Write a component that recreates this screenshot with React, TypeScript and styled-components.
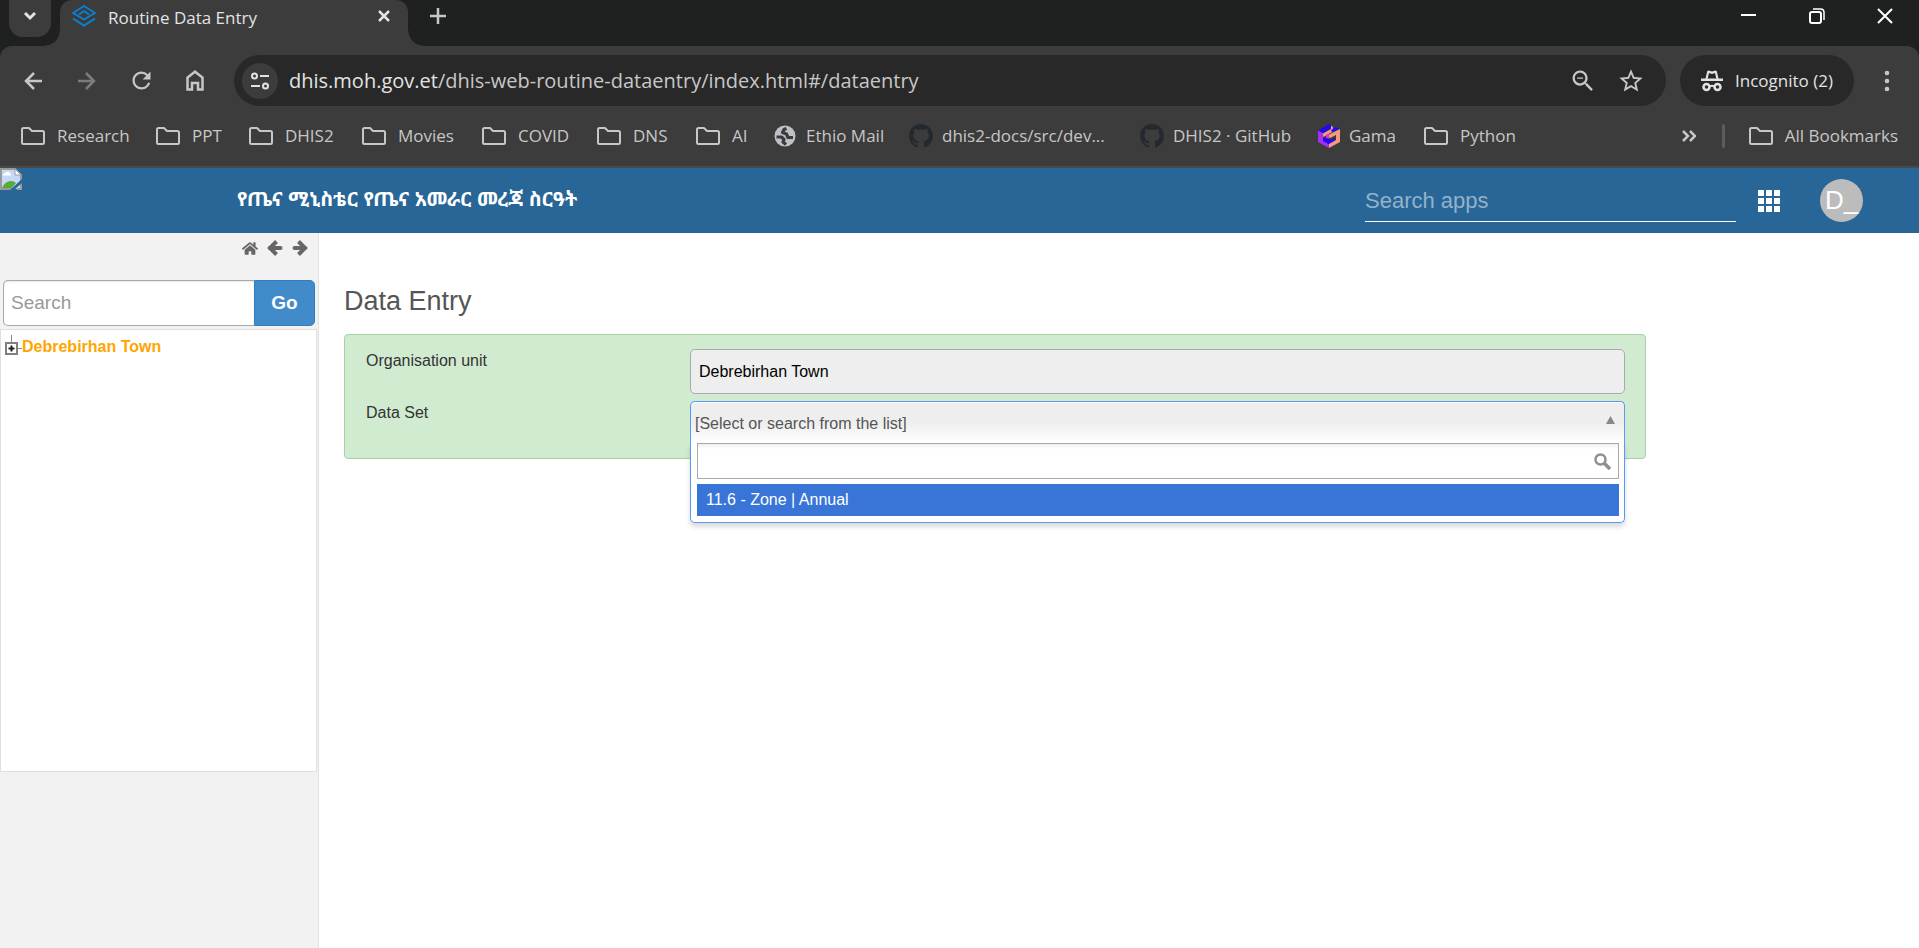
import React, { useState } from 'react';
import styled, { createGlobalStyle } from 'styled-components';
import { MdRefresh, MdStarBorder, MdZoomOut } from 'react-icons/md';
import { FaHome } from 'react-icons/fa';

const GlobalStyle = createGlobalStyle`
  * { box-sizing: border-box; }
  html, body, #root { height: 100%; }
  body {
    margin: 0;
    font-family: "Liberation Sans", Arial, sans-serif;
    font-size: 16px;
    background: #fff;
  }
  button, input { font-family: inherit; }
`;

const Window = styled.div`
  display: flex;
  flex-direction: column;
  min-height: 100%;
`;

/* ---------- browser chrome ---------- */

const Chrome = styled.div`
  background: #1f2120;
  font-family: "Open Sans", "Noto Sans", sans-serif;
  color: #c7c7c7;
`;

const PlainButton = styled.button`
  display: flex;
  align-items: center;
  justify-content: center;
  flex: none;
  padding: 0;
  border: 0;
  background: none;
  color: inherit;
  cursor: pointer;
`;

const TabStrip = styled.div`
  display: flex;
  height: 46px;
  padding-left: 9px;
`;

const TabSearch = styled(PlainButton)`
  width: 42px;
  height: 37px;
  margin-right: 9px;
  padding-bottom: 5px;
  border-radius: 0 0 14px 14px;
  background: #3c3c3c;
  color: #e3e3e3;
`;

const Tab = styled.div`
  position: relative;
  display: flex;
  align-items: center;
  width: 348px;
  padding: 0 18px 14px 12px;
  border-radius: 12px 12px 0 0;
  background: #3c3c3c;
  color: #e3e3e3;

  &::before, &::after {
    content: "";
    position: absolute;
    bottom: 0;
    width: 15px;
    height: 15px;
  }
  &::before {
    right: 100%;
    background: radial-gradient(circle at 0 0, transparent 14px, #3c3c3c 15px);
  }
  &::after {
    left: 100%;
    background: radial-gradient(circle at 100% 0, transparent 14px, #3c3c3c 15px);
  }
`;

const TabTitle = styled.span`
  flex: 1;
  margin-left: 12px;
  padding-top: 4px;
  font-size: 17px;
  line-height: 20px;
  white-space: nowrap;
`;

const NewTab = styled(PlainButton)`
  width: 30px;
  height: 32px;
  margin-left: 15px;
`;

const WindowControls = styled.div`
  display: flex;
  margin-left: auto;
  color: #fff;
`;

const WindowButton = styled(PlainButton)`
  width: 68px;
  height: 31px;
`;

const Toolbar = styled.div`
  display: flex;
  align-items: center;
  height: 69px;
  padding: 0 13px 0 6px;
  border-radius: 12px 12px 0 0;
  background: #3c3c3c;
`;

const NavButton = styled(PlainButton)<{ $dim?: boolean }>`
  width: 54px;
  height: 40px;
  color: ${(p) => (p.$dim ? '#7c7c7c' : '#c7c7c7')};
`;

const AddressBar = styled.div`
  display: flex;
  flex: 1;
  align-items: center;
  min-width: 0;
  height: 51px;
  margin-left: 12px;
  padding: 0 11px 0 8px;
  border-radius: 26px;
  background: #282828;
`;

const SiteInfo = styled(PlainButton)`
  width: 36px;
  height: 36px;
  border-radius: 50%;
  background: #3c3c3c;
  color: #e3e3e3;
`;

const Url = styled.div`
  flex: 1;
  min-width: 0;
  margin-left: 11px;
  overflow: hidden;
  font-size: 20px;
  line-height: 28px;
  white-space: nowrap;

  strong { font-weight: 400; color: #e3e3e3; }
`;

const BarButton = styled(PlainButton)`
  width: 48px;
  height: 40px;
`;

const Incognito = styled(PlainButton)`
  gap: 12px;
  width: 174px;
  height: 51px;
  margin: 0 14px;
  border-radius: 26px;
  background: #282828;
  color: #e3e3e3;
  font-size: 17px;
  white-space: nowrap;
`;

const MenuButton = styled(PlainButton)`
  width: 38px;
  height: 40px;
`;

const BookmarksBar = styled.nav`
  display: flex;
  align-items: center;
  height: 53px;
  padding: 0 21px 10px;
  border-bottom: 2px solid #4a4a4a;
  background: #3c3c3c;
`;

const Bookmark = styled.a<{ $width?: number; $gap?: number }>`
  display: flex;
  flex: none;
  align-items: center;
  gap: ${(p) => p.$gap ?? 12}px;
  width: ${(p) => (p.$width ? `${p.$width}px` : 'auto')};
  color: inherit;
  font-size: 17px;
  line-height: 24px;
  text-decoration: none;
  white-space: nowrap;
`;

const Overflow = styled(PlainButton)`
  width: 14px;
  margin-left: auto;
`;

const Divider = styled.span`
  width: 3px;
  height: 24px;
  margin: 0 24px 0 26px;
  border-radius: 2px;
  background: #5c5c5c;
`;

/* ---------- application ---------- */

const Header = styled.header`
  display: flex;
  height: 65px;
  padding-right: 56px;
  background: #276696;
  color: #fff;
`;

const Logo = styled.a`
  display: block;
  width: 237px;
`;

const SiteTitle = styled.h1`
  margin: 0 auto 0 0;
  padding-top: 18px;
  font-family: "Liberation Sans", "Noto Sans Ethiopic", "Abyssinica SIL", "Nyala", sans-serif;
  font-size: 20px;
  line-height: 26px;
  white-space: nowrap;
`;

const AppSearch = styled.input`
  width: 371px;
  height: 42px;
  margin-top: 12px;
  padding: 0;
  border: 0;
  border-bottom: 1px solid #fff;
  outline: 0;
  background: none;
  color: #fff;
  font-size: 22px;

  &::placeholder { color: #93b2ca; opacity: 1; }
`;

const AppsButton = styled(PlainButton)`
  align-self: center;
  width: 22px;
  height: 22px;
  margin: 0 40px 0 22px;
`;

const Avatar = styled(PlainButton)`
  align-self: center;
  width: 43px;
  height: 43px;
  border-radius: 50%;
  background: #bcbcbc;
  color: #fff;
  font-size: 26px;
`;

const Body = styled.div`
  display: flex;
  flex: 1;
`;

const Sidebar = styled.aside`
  display: flex;
  flex-direction: column;
  flex: none;
  width: 319px;
  padding-right: 1px;
  border-right: 1px solid #e0e0e0;
  background: #f2f2f2;
`;

const SidebarTools = styled.div`
  display: flex;
  justify-content: flex-end;
  gap: 9px;
  height: 47px;
  padding: 7px 9px 0 0;
  color: #666;
`;

const ToolButton = styled(PlainButton)`
  width: 16px;
  height: 16px;
`;

const SearchForm = styled.form`
  display: flex;
  margin: 0 2px 3px 3px;
`;

const SearchInput = styled.input`
  flex: 1;
  min-width: 0;
  height: 46px;
  padding: 0 7px;
  border: 1px solid #aaa;
  border-right: 0;
  border-radius: 5px 0 0 5px;
  outline: 0;
  box-shadow: inset 0 1px 2px rgba(0, 0, 0, 0.1);
  font-size: 19px;

  &::placeholder { color: #999; opacity: 1; }
`;

const GoButton = styled.button`
  width: 61px;
  height: 46px;
  padding: 0;
  border: 1px solid #357ebd;
  border-radius: 0 5px 5px 0;
  background: #428bca;
  color: #fff;
  font-size: 19px;
  font-weight: 700;
  cursor: pointer;
`;

const Tree = styled.ul`
  height: 443px;
  margin: 0;
  padding: 5px 0 0 4px;
  border: 1px solid #e0e0e0;
  background: #fff;
  list-style: none;
`;

const TreeItem = styled.li`
  display: flex;
  align-items: flex-start;
`;

const TreeLink = styled.a`
  margin-top: 2px;
  color: #ffa500;
  font-weight: 700;
  line-height: 20px;
  text-decoration: none;
`;

const Main = styled.main`
  display: grid;
  flex: 1;
  grid-template-columns: minmax(0, 62fr) 13fr;
  align-content: start;
  padding: 52px 0 0 25px;
`;

const PageTitle = styled.h2`
  grid-column: 1 / -1;
  margin: 0 0 17px;
  color: #555;
  font-size: 27px;
  font-weight: 400;
  line-height: 32px;
`;

const FormPanel = styled.div`
  display: grid;
  grid-template-columns: 324px minmax(0, 1fr);
  row-gap: 7px;
  padding: 14px 20px 12px 21px;
  border: 1px solid #a3d3a3;
  border-radius: 4px;
  background: #d0ebd0;
  color: #333;
`;

const FieldLabel = styled.label`
  padding-top: 2px;
  line-height: 20px;
`;

const UnitInput = styled.input`
  width: 100%;
  height: 45px;
  padding: 0 8px;
  border: 1px solid #aaa;
  border-radius: 5px;
  outline: 0;
  background: #eee;
  color: #000;
  font-size: 16px;
`;

const Combo = styled.div`
  position: relative;
  height: 45px;
`;

const ComboTrigger = styled.button`
  display: flex;
  align-items: center;
  justify-content: space-between;
  width: 100%;
  height: 42px;
  padding: 2px 9px 0 4px;
  border: 1px solid #5897fb;
  border-bottom: 0;
  border-radius: 5px 5px 0 0;
  background: linear-gradient(#eee 50%, #fff);
  box-shadow: inset 0 1px 0 #fff;
  color: #555;
  font-size: 16px;
  text-align: left;
  cursor: pointer;

  svg { margin-bottom: 7px; }
`;

const Drop = styled.div`
  position: absolute;
  top: 42px;
  left: 0;
  right: 0;
  padding: 0 5px 6px 6px;
  border: 1px solid #5897fb;
  border-top: 0;
  border-radius: 0 0 5px 5px;
  background: #fff;
  box-shadow: 0 4px 5px rgba(0, 0, 0, 0.15);
`;

const DropSearch = styled.label`
  display: flex;
  align-items: center;
  height: 36px;
  padding-right: 7px;
  border: 1px solid #aaa;
  background: linear-gradient(#eee, #fff 15%);
  color: #909090;

  input {
    flex: 1;
    min-width: 0;
    height: 100%;
    padding: 0 6px;
    border: 0;
    outline: 0;
    background: none;
    font-size: 16px;
  }
`;

const Options = styled.ul`
  margin: 5px 0 0;
  padding: 0;
  list-style: none;
`;

const Option = styled.li`
  padding: 6px 9px;
  background: #3875d7;
  color: #fff;
  line-height: 20px;
  cursor: pointer;
`;

/* ---------- drawings ---------- */

const stroke = { fill: 'none', stroke: 'currentColor' } as const;

const FolderIcon = () => (
  <svg width="24" height="18" viewBox="0 0 24 18" {...stroke} strokeWidth="2" strokeLinejoin="round">
    <path d="M1 2.5Q1 1 2.5 1H8l3 3h10.5Q23 4 23 5.5v10q0 1.5-1.5 1.5h-19Q1 17 1 15.5z" />
  </svg>
);

const GlobeIcon = () => (
  <svg width="23" height="22" viewBox="0 0 23 22" {...stroke}>
    <circle cx="11" cy="11" r="10.5" fill="#bdc1c6" stroke="none" />
    <path stroke="#3c3c3c" strokeWidth="3.2" strokeLinejoin="round" d="M2.5 12h5l2.500 2.500-1 2.500 3 2.500M12.500 3.500 10 4.500 8.500 7.500l4 1.500 1.500 3.500h5" />
  </svg>
);

const GithubIcon = () => (
  <svg width="24" height="24" viewBox="0 0 16 16" fill="#24292f">
    <path d="M8 0C3.58 0 0 3.58 0 8c0 3.54 2.29 6.53 5.47 7.59.4.07.55-.17.55-.38 0-.19-.01-.82-.01-1.49-2.01.37-2.53-.49-2.69-.94-.09-.23-.48-.94-.82-1.13-.28-.15-.68-.52-.01-.53.63-.01 1.08.58 1.23.82.72 1.21 1.87.87 2.33.66.07-.52.28-.87.51-1.07-1.78-.2-3.64-.89-3.64-3.95 0-.87.31-1.59.82-2.15-.08-.2-.36-1.02.08-2.12 0 0 .67-.21 2.2.82.64-.18 1.32-.27 2-.27s1.36.09 2 .27c1.53-1.04 2.2-.82 2.2-.82.44 1.1.16 1.92.08 2.12.51.56.82 1.27.82 2.15 0 3.07-1.87 3.75-3.65 3.95.29.25.54.73.54 1.48 0 1.07-.01 1.93-.01 2.2 0 .21.15.46.55.38A8.01 8.01 0 0 0 16 8c0-4.42-3.58-8-8-8z" />
  </svg>
);

const GamaIcon = () => (
  <svg width="22" height="24" viewBox="0 0 22 24">
    <path fill="#a62ff5" d="M0 6.500 5 9v7l6 4v4L0 18z" />
    <path fill="#2208f5" d="M11 0 0 6.500 5 9l8-4.500V1.500z" />
    <path fill="#f59a7d" d="M13 1.500V5L5 9.500V13l3-1.500 7-4V3z" />
    <path fill="#2208f5" d="M5 14v3l6 3.500 6-3.500v-3l-5 2-3-2zM14 8l8-3-4-2-5 3z" />
    <path fill="#f59a7d" d="M22 5v13l-11 6v-4l7-4v-5l-6 3-3-2 5-3z" />
    <path fill="#e12fd8" d="m8 11 3-1.500v5L8 14z" />
  </svg>
);

const DhisIcon = () => (
  <svg width="24" height="22" viewBox="0 0 24 22" fill="none" stroke="#0a80d0" strokeWidth="2" strokeLinejoin="round">
    <path d="M1 8 12 1l11 7-11 6.5z" />
    <path d="M7 9.5 12 6l5 3.5" />
    <path d="m1 13.5 11 7.2 11-7.2" />
  </svg>
);

const BrokenImage = () => (
  <svg width="22" height="22" viewBox="0 0 22 22" role="img" aria-label="logo">
    <path fill="#c5d9f7" d="M1 1h14l6 6v14H1z" />
    <path fill="#fff" d="M3 7q0-2 2.500-2 1-2 3-1t2 2 1 1.500H3z" />
    <path fill="#58ab3a" d="M2 20q3-7 9-7 3 0 5 2l-5 6H2z" />
    <path fill="none" stroke="#9a9a9a" strokeWidth="2" d="M1 22V1h14l6 6v15M0 21h13M17 21h4" />
    <path fill="#fff" stroke="#9a9a9a" d="M15 1v6h6z" />
    <path fill="#276696" d="M22 11v4l-8 7h-4z" />
  </svg>
);

const IncognitoIcon = () => (
  <svg width="22" height="22" viewBox="0 0 22 22">
    <path fill="currentColor" d="M7.5.5 11 1.5 14.5.5q1 0 1.3 1L17.5 8.500H22v2.500H0V8.500h4.500L6.200 1.500Q6.500.5 7.500.5z" />
    <path fill="#282828" d="m8 3-1.300 5.500h8.600L14 3l-3 1z" />
    <path {...stroke} strokeWidth="2" d="M8.500 16.500q2.500-1.500 5 0" />
    <circle cx="5.5" cy="17" r="3" {...stroke} strokeWidth="2.5" />
    <circle cx="16.5" cy="17" r="3" {...stroke} strokeWidth="2.5" />
  </svg>
);

const AppsIcon = () => (
  <svg width="22" height="22" viewBox="0 0 22 22" fill="currentColor">
    {[0, 8, 16].map((y) => [0, 8, 16].map((x) => <rect key={`${x}-${y}`} x={x} y={y} width="6" height="6" />))}
  </svg>
);

const ArrowIcon = ({ right }: { right?: boolean }) => (
  <svg width="16" height="16" viewBox="0 0 16 16" {...stroke} strokeWidth="4">
    <path strokeLinecap="round" d={right ? 'M2.500 8H13' : 'M13.500 8H3'} />
    <path d={right ? 'm6.500 1.500 6.500 6.500-6.500 6.500' : 'M9.500 1.500 3 8l6.500 6.500'} />
  </svg>
);

const MagnifierIcon = () => (
  <svg width="17" height="17" viewBox="0 0 17 17" {...stroke}>
    <circle cx="6.5" cy="6.5" r="5" strokeWidth="2.5" />
    <path strokeWidth="3.5" d="m10 10 6 6" />
  </svg>
);

const ExpandIcon = () => (
  <svg width="17" height="20" viewBox="0 0 17 20" {...stroke}>
    <path stroke="#888" d="M6.5 0v7M12 13.5h5" />
    <rect x="1" y="8" width="11" height="11" stroke="#808080" strokeWidth="2" fill="#fff" />
    <path stroke="#222" strokeWidth="2" d="M3.500 13.500h6M6.500 10.500v6" />
  </svg>
);

type Mark = { label: string; width?: number; kind?: 'globe' | 'github' | 'gama' };

const bookmarks: Mark[] = [
  { label: 'Research', width: 135 },
  { label: 'PPT', width: 93 },
  { label: 'DHIS2', width: 113 },
  { label: 'Movies', width: 120 },
  { label: 'COVID', width: 115 },
  { label: 'DNS', width: 99 },
  { label: 'AI', width: 78 },
  { label: 'Ethio Mail', width: 135, kind: 'globe' },
  { label: 'dhis2-docs/src/dev...', width: 231, kind: 'github' },
  { label: 'DHIS2 · GitHub', width: 178, kind: 'github' },
  { label: 'Gama', width: 106, kind: 'gama' },
  { label: 'Python' },
];

const MarkIcon = ({ kind }: { kind?: Mark['kind'] }) => {
  if (kind === 'globe') return <GlobeIcon />;
  if (kind === 'github') return <GithubIcon />;
  if (kind === 'gama') return <GamaIcon />;
  return <FolderIcon />;
};

const BrowserChrome = () => (
  <Chrome>
    <TabStrip>
      <TabSearch aria-label="Search tabs">
        <svg width="14" height="10" viewBox="0 0 14 10" {...stroke} strokeWidth="3"><path d="m2 2 5 5 5-5" /></svg>
      </TabSearch>
      <Tab>
        <DhisIcon />
        <TabTitle>Routine Data Entry</TabTitle>
        <PlainButton aria-label="Close tab">
          <svg width="12" height="12" viewBox="0 0 12 12" {...stroke} strokeWidth="2.5"><path d="m1 1 10 10M11 1 1 11" /></svg>
        </PlainButton>
      </Tab>
      <NewTab aria-label="New tab">
        <svg width="16" height="16" viewBox="0 0 16 16" {...stroke} strokeWidth="2.5"><path d="M8 0v16M0 8h16" /></svg>
      </NewTab>
      <WindowControls>
        <WindowButton aria-label="Minimize">
          <svg width="16" height="16" viewBox="0 0 16 16" {...stroke} strokeWidth="2"><path d="M0 7h15" /></svg>
        </WindowButton>
        <WindowButton aria-label="Restore">
          <svg width="16" height="16" viewBox="0 0 16 16" {...stroke} strokeWidth="2">
            <rect x="1" y="4" width="11" height="11" rx="2" />
            <path strokeWidth="1.5" d="M4 1h7.500Q15 1 15 4.500V12" />
          </svg>
        </WindowButton>
        <WindowButton aria-label="Close">
          <svg width="16" height="16" viewBox="0 0 16 16" {...stroke} strokeWidth="2"><path d="m1 1 14 14M15 1 1 15" /></svg>
        </WindowButton>
      </WindowControls>
    </TabStrip>
    <Toolbar>
      <NavButton aria-label="Back">
        <svg width="18" height="18" viewBox="0 0 18 18" {...stroke} strokeWidth="2.5"><path d="M18 9H2M10 1 2 9l8 8" /></svg>
      </NavButton>
      <NavButton aria-label="Forward" $dim>
        <svg width="18" height="18" viewBox="0 0 18 18" {...stroke} strokeWidth="2.5"><path d="M0 9h16M8 1l8 8-8 8" /></svg>
      </NavButton>
      <NavButton aria-label="Reload"><MdRefresh size={27} /></NavButton>
      <NavButton aria-label="Home">
        <svg width="18" height="21" viewBox="0 0 18 21" {...stroke} strokeWidth="2.5"><path d="M1.500 19.500V7.500L9 1.700l7.500 5.800v12H12V13H6v6.500z" /></svg>
      </NavButton>
      <AddressBar>
        <SiteInfo aria-label="View site information">
          <svg width="18" height="18" viewBox="0 0 18 18" {...stroke} strokeWidth="2">
            <circle cx="3.5" cy="4" r="2.5" /><path d="M9 4h9M0 14h9" /><circle cx="14.5" cy="14" r="2.5" />
          </svg>
        </SiteInfo>
        <Url><strong>dhis.moh.gov.et</strong>/dhis-web-routine-dataentry/index.html#/dataentry</Url>
        <BarButton aria-label="Zoom"><MdZoomOut size={28} /></BarButton>
        <BarButton aria-label="Bookmark this tab"><MdStarBorder size={28} /></BarButton>
      </AddressBar>
      <Incognito><IncognitoIcon />Incognito (2)</Incognito>
      <MenuButton aria-label="Menu">
        <svg width="6" height="22" viewBox="0 0 6 22" fill="currentColor">
          <circle cx="3" cy="3" r="2.3" /><circle cx="3" cy="11" r="2.3" /><circle cx="3" cy="19" r="2.3" />
        </svg>
      </MenuButton>
    </Toolbar>
    <BookmarksBar aria-label="Bookmarks">
      {bookmarks.map((b) => (
        <Bookmark key={b.label} href="#" $width={b.width} $gap={b.kind ? 9 : 12}>
          <MarkIcon kind={b.kind} />
          {b.label}
        </Bookmark>
      ))}
      <Overflow aria-label="More bookmarks">
        <svg width="14" height="12" viewBox="0 0 14 12" {...stroke} strokeWidth="2.5"><path d="m1 1 5 5-5 5M8 1l5 5-5 5" /></svg>
      </Overflow>
      <Divider />
      <Bookmark href="#"><FolderIcon />All Bookmarks</Bookmark>
    </BookmarksBar>
  </Chrome>
);

export default function App() {
  const [appQuery, setAppQuery] = useState('');
  const [unitQuery, setUnitQuery] = useState('');
  const [open, setOpen] = useState(true);
  const [dataSetQuery, setDataSetQuery] = useState('');

  return (
    <Window>
      <GlobalStyle />
      <BrowserChrome />
      <Header>
        <Logo href="#"><BrokenImage /></Logo>
        <SiteTitle lang="am">የጤና ሚኒስቴር የጤና አመራር መረጃ ስርዓት</SiteTitle>
        <AppSearch aria-label="Search apps" placeholder="Search apps" value={appQuery} onChange={(e) => setAppQuery(e.target.value)} />
        <AppsButton aria-label="Apps"><AppsIcon /></AppsButton>
        <Avatar aria-label="Profile">D_</Avatar>
      </Header>
      <Body>
        <Sidebar>
          <SidebarTools>
            <ToolButton aria-label="Home"><FaHome size={17} /></ToolButton>
            <ToolButton aria-label="Hide tree"><ArrowIcon /></ToolButton>
            <ToolButton aria-label="Show tree"><ArrowIcon right /></ToolButton>
          </SidebarTools>
          <SearchForm onSubmit={(e) => e.preventDefault()}>
            <SearchInput aria-label="Search" placeholder="Search" value={unitQuery} onChange={(e) => setUnitQuery(e.target.value)} />
            <GoButton type="submit">Go</GoButton>
          </SearchForm>
          <Tree>
            <TreeItem>
              <PlainButton aria-label="Expand"><ExpandIcon /></PlainButton>
              <TreeLink href="#">Debrebirhan Town</TreeLink>
            </TreeItem>
          </Tree>
        </Sidebar>
        <Main>
          <PageTitle>Data Entry</PageTitle>
          <FormPanel>
            <FieldLabel htmlFor="unit">Organisation unit</FieldLabel>
            <UnitInput id="unit" readOnly value="Debrebirhan Town" />
            <FieldLabel htmlFor="dataset">Data Set</FieldLabel>
            <Combo>
              <ComboTrigger id="dataset" type="button" aria-haspopup="listbox" aria-expanded={open} onClick={() => setOpen(!open)}>
                [Select or search from the list]
                <svg width="9" height="8" viewBox="0 0 9 8"><path fill="#888" d="M4.500 0 9 8H0z" /></svg>
              </ComboTrigger>
              {open && (
                <Drop>
                  <DropSearch>
                    <input aria-label="Search data sets" value={dataSetQuery} onChange={(e) => setDataSetQuery(e.target.value)} />
                    <MagnifierIcon />
                  </DropSearch>
                  <Options role="listbox">
                    <Option role="option" aria-selected>11.6 - Zone | Annual</Option>
                  </Options>
                </Drop>
              )}
            </Combo>
          </FormPanel>
        </Main>
      </Body>
    </Window>
  );
}
